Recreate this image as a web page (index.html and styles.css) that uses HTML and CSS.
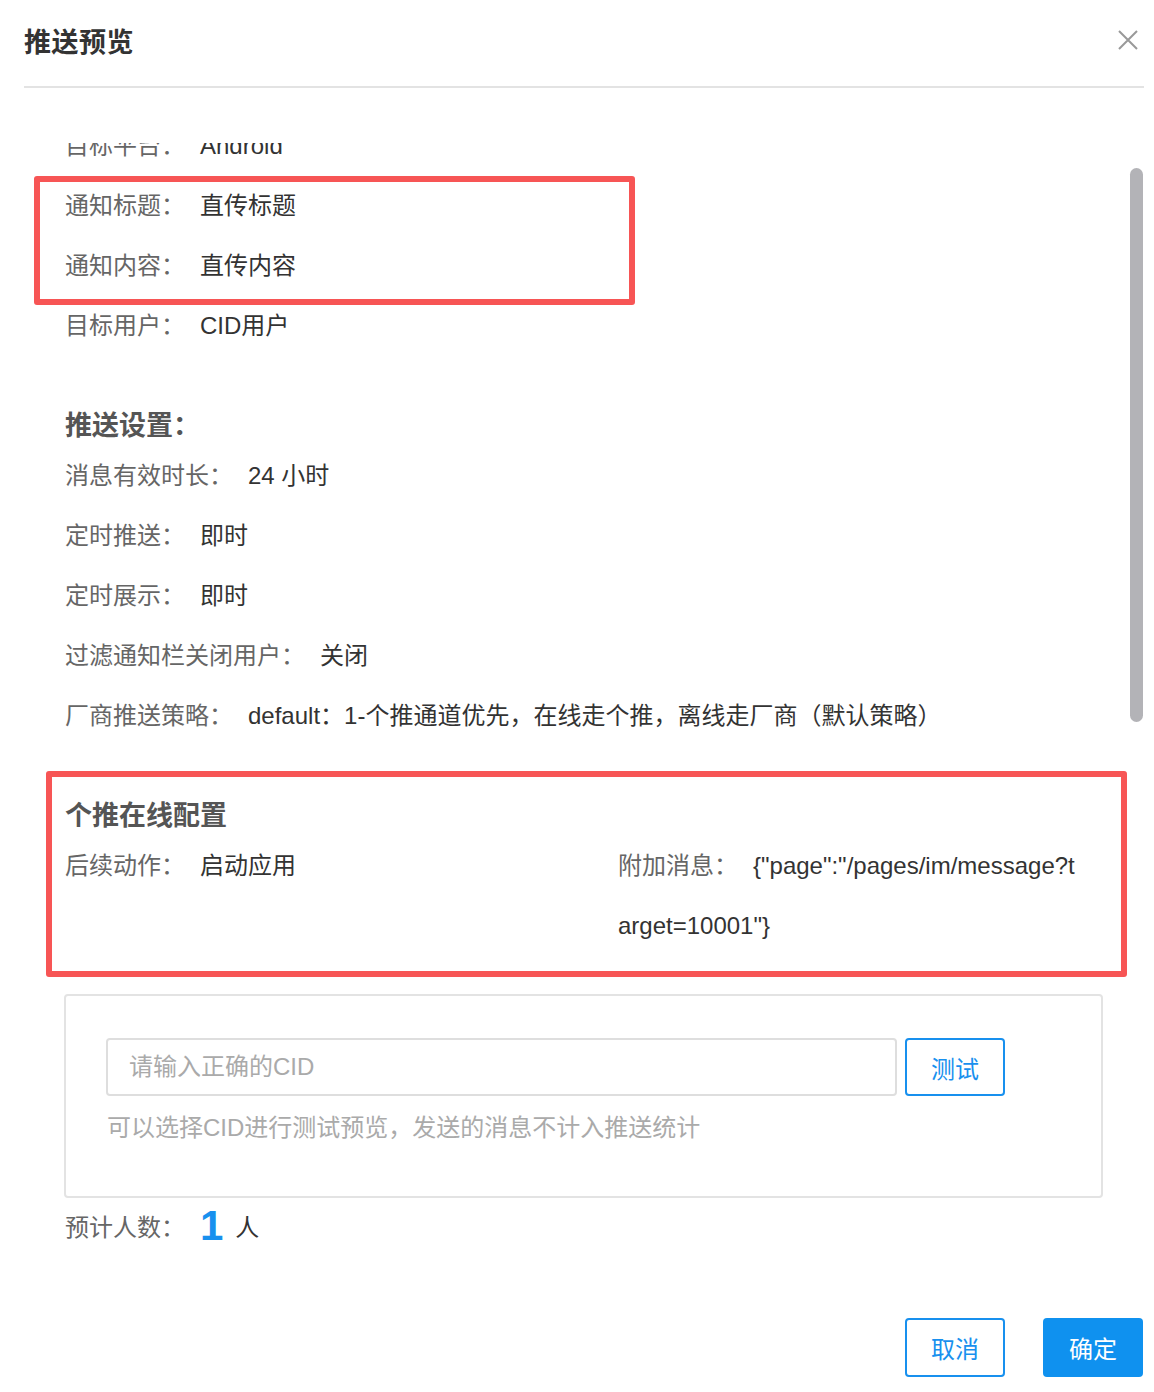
FILE: index.html
```html
<!DOCTYPE html>
<html lang="zh-CN">
  <head>
    <meta charset="UTF-8" />
    <meta name="viewport" content="width=device-width, initial-scale=1.0" />
    <title>推送预览</title>
    <link rel="stylesheet" href="styles.css">
  </head>
  <body>
    <div class="dialog">
      <div class="dialog-header">
        <h2 class="dialog-title">推送预览</h2>
        <button class="close-btn" aria-label="关闭">
          <svg width="20" height="20" viewBox="0 0 20 20">
            <path d="M1 1 L19 19 M19 1 L1 19" stroke="#999" stroke-width="2" fill="none" />
          </svg>
        </button>
      </div>

      <div class="dialog-body">
        <div class="scroll-content">
          <div class="row"><span class="label">目标平台：</span><span class="value">Android</span></div>
          <div class="mark mark-notice">
            <div class="row"><span class="label">通知标题：</span><span class="value">直传标题</span></div>
            <div class="row"><span class="label">通知内容：</span><span class="value">直传内容</span></div>
          </div>
          <div class="row"><span class="label">目标用户：</span><span class="value">CID用户</span></div>

          <div class="section">
            <h3 class="section-title">推送设置：</h3>
            <div class="row"><span class="label">消息有效时长：</span><span class="value">24 小时</span></div>
            <div class="row"><span class="label">定时推送：</span><span class="value">即时</span></div>
            <div class="row"><span class="label">定时展示：</span><span class="value">即时</span></div>
            <div class="row"><span class="label">过滤通知栏关闭用户：</span><span class="value">关闭</span></div>
            <div class="row"><span class="label">厂商推送策略：</span><span class="value">default：1-个推通道优先，在线走个推，离线走厂商（默认策略）</span></div>
          </div>

          <div class="section mark mark-online">
            <h3 class="section-title">个推在线配置</h3>
            <div class="row-pair">
              <div class="row"><span class="label">后续动作：</span><span class="value">启动应用</span></div>
              <div class="row"><span class="label">附加消息：</span><span class="value">{"page":"/pages/im/message?target=10001"}</span></div>
            </div>
          </div>

          <div class="test-box">
            <div class="test-line">
              <input class="cid-input" type="text" placeholder="请输入正确的CID" />
              <button class="btn btn-outline btn-test">测试</button>
            </div>
            <p class="test-hint">可以选择CID进行测试预览，发送的消息不计入推送统计</p>
          </div>

          <div class="row"><span class="label">预计人数：</span><span class="count">1</span><span class="value">人</span></div>
        </div>
        <div class="scrollbar"></div>
      </div>

      <div class="dialog-footer">
        <button class="btn btn-outline">取消</button>
        <button class="btn btn-primary">确定</button>
      </div>
    </div>
  </body>
</html>
```

FILE: styles.css
```css
body {
  margin: 0;
  background: #fff;
  font-family: "Liberation Sans", "Noto Sans CJK SC", sans-serif;
  color: #333;
}
.dialog {
  width: 1154px;
  height: 1392px;
  padding: 0 10px 0 24px;
  box-sizing: border-box;
}
.dialog-header {
  height: 88px;
  border-bottom: 2px solid #e3e3e3;
  display: flex;
  align-items: center;
  justify-content: space-between;
  padding-bottom: 6px;
  box-sizing: border-box;
}
.dialog-title {
  margin: 0;
  font-size: 27px;
  font-weight: 600;
  color: #333;
  letter-spacing: 0.5px;
}
.close-btn {
  border: none;
  background: none;
  padding: 0;
  margin-right: 6px;
  width: 20px;
  height: 20px;
  cursor: pointer;
}
.dialog-body {
  position: relative;
  margin-top: 55px;
  height: 1150px;
  overflow: hidden;
}
.scroll-content {
  margin-top: -27px;
  padding-left: 41px;
  width: 1020px;
}
.scrollbar {
  position: absolute;
  top: 25px;
  right: 1px;
  width: 13px;
  height: 554px;
  border-radius: 7px;
  background: #b3b3b7;
}
.row {
  font-size: 24px;
  line-height: 60px;
  word-break: break-all;
}
.label {
  color: #666;
  margin-right: 15px;
}
.value {
  color: #333;
}
.section {
  margin-top: 50px;
}
.section-title {
  margin: 0;
  font-size: 27px;
  line-height: 40px;
  font-weight: 600;
  color: #555;
}
.row-pair {
  display: grid;
  grid-template-columns: 553px 1fr;
}
.mark {
  position: relative;
}
.mark::after {
  content: "";
  position: absolute;
  border: 6px solid #f75555;
  border-radius: 3px;
  box-sizing: border-box;
  pointer-events: none;
}
.mark-notice::after {
  left: -31px;
  top: 0;
  width: 601px;
  height: 129px;
}
.mark-online::after {
  left: -19px;
  top: -25px;
  width: 1081px;
  height: 206px;
}
.test-box {
  margin: 38px 0 0 -1px;
  width: 1039px;
  box-sizing: border-box;
  border: 2px solid #e3e3e3;
  border-radius: 4px;
  padding: 42px 40px 52px;
}
.test-line {
  display: flex;
  gap: 8px;
}
.cid-input {
  width: 791px;
  height: 58px;
  box-sizing: border-box;
  border: 2px solid #dedede;
  border-radius: 4px;
  padding: 0 21px;
  font-family: inherit;
  font-size: 24px;
  color: #333;
  outline: none;
}
.cid-input::placeholder {
  color: #aaa;
}
.test-hint {
  margin: 16px 0 0 1px;
  font-size: 24px;
  line-height: 32px;
  color: #aaa;
}
.btn {
  width: 100px;
  height: 59px;
  box-sizing: border-box;
  border-radius: 4px;
  font-family: inherit;
  font-size: 24px;
  cursor: pointer;
}
.btn-outline {
  border: 2px solid #1890ee;
  background: #fff;
  color: #1890ee;
}
.btn-test {
  height: 58px;
}
.btn-primary {
  border: none;
  background: #0f91ef;
  color: #fff;
}
.count {
  font-size: 42px;
  font-weight: bold;
  color: #1890ee;
  margin-right: 12px;
  vertical-align: -4px;
  line-height: 40px;
}
.dialog-footer {
  margin-top: 25px;
  display: flex;
  justify-content: flex-end;
  gap: 38px;
  padding-right: 1px;
}
```
